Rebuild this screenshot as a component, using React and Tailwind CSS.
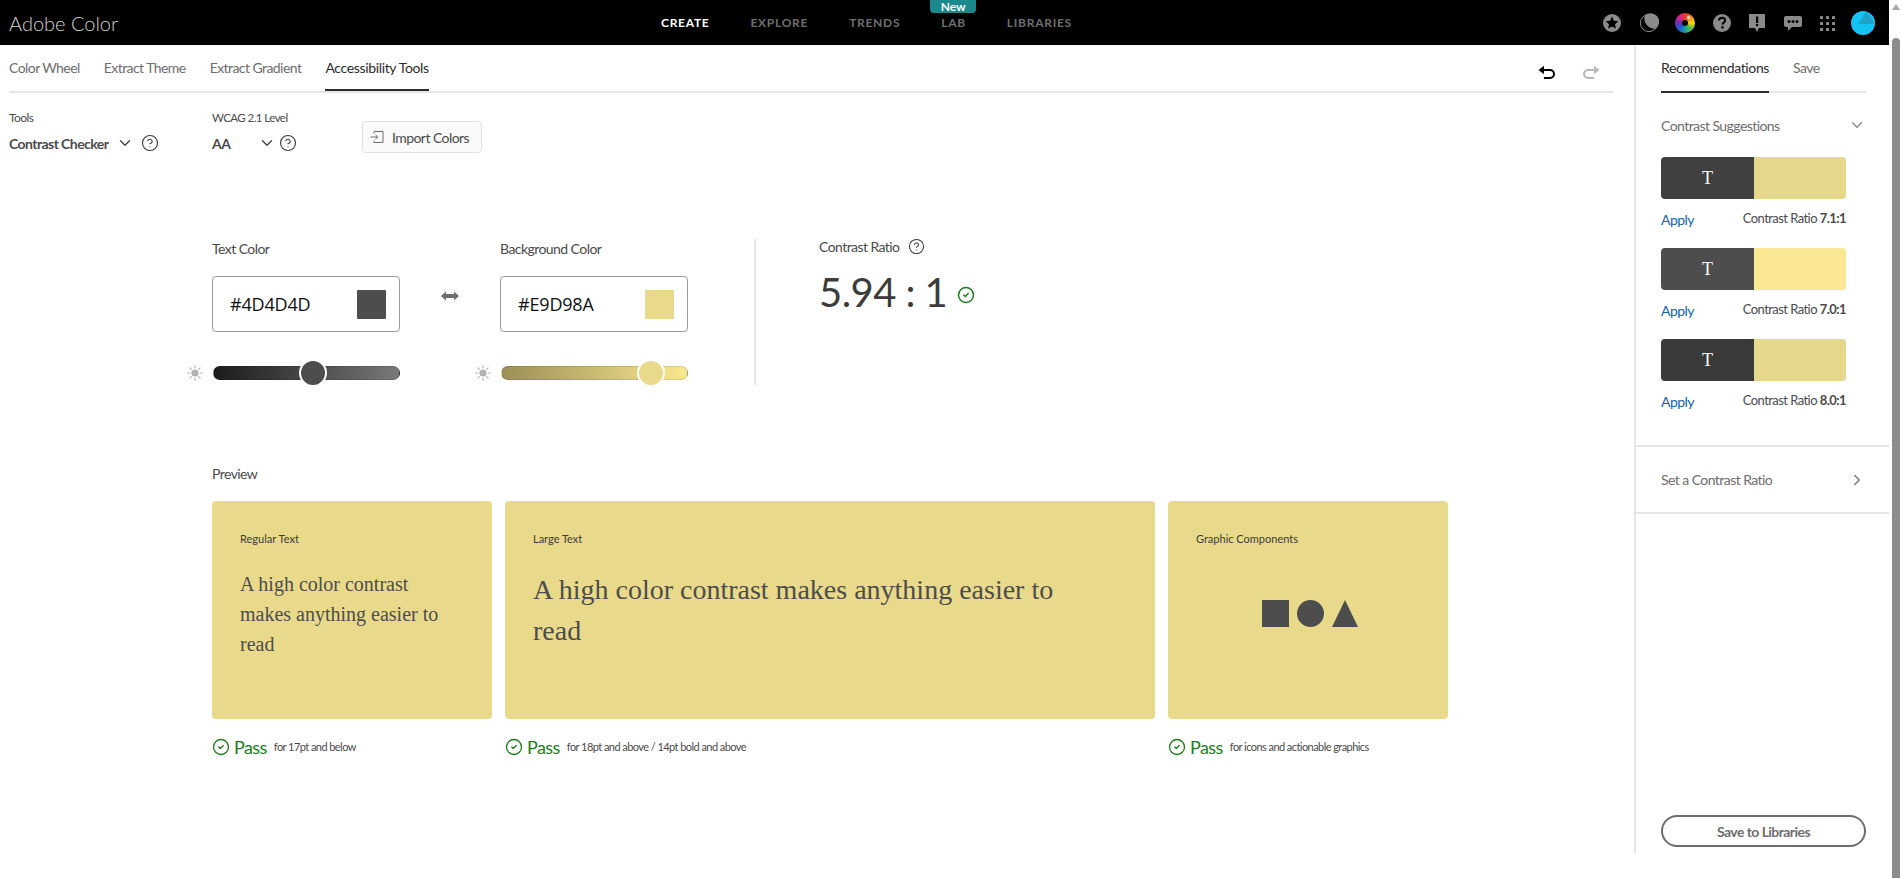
import { ChevronDown, ChevronRight, CircleCheck, CircleHelp } from 'lucide-react'

const cleanFont = "font-['Lato','Noto_Sans',sans-serif] tracking-[-0.035em]"

const suggestions = [
  { dark: 'bg-[#404040]', light: 'bg-[#e6d88a]', ratio: '7.1:1' },
  { dark: 'bg-[#4d4d4d]', light: 'bg-[#fbe894]', ratio: '7.0:1' },
  { dark: 'bg-[#3a3a3a]', light: 'bg-[#e6d88a]', ratio: '8.0:1' },
]

function Sun() {
  return (
    <svg width="16" height="16" viewBox="0 0 16 16" className="shrink-0 text-[#b3b3b3]">
      <circle cx="8" cy="8" r="3.6" fill="currentColor" />
      <g stroke="currentColor" strokeWidth="1.2" strokeLinecap="round">
        <path d="M8 .8v2M8 13.2v2M.8 8h2M13.2 8h2M2.9 2.9l1.4 1.4M11.7 11.7l1.4 1.4M2.9 13.1l1.4-1.4M11.7 4.3l1.4-1.4" />
      </g>
    </svg>
  )
}

function ColorField({ label, value, swatch }) {
  return (
    <div className="w-[188px]">
      <div className="flex h-[19px] items-center text-[14px] text-[#4b4b4b]">{label}</div>
      <div className="mt-[18px] flex h-[56px] items-center justify-between rounded-[4px] border border-[#999999] pl-[17px] pr-[13px]">
        <span className="font-['Open_Sans',sans-serif] text-[18px] tracking-[-0.01em] text-[#111111]">{value}</span>
        <div className={`h-[29px] w-[29px] rounded-[1px] ${swatch}`} />
      </div>
    </div>
  )
}

function Slider({ track, thumb, left }) {
  return (
    <div className="-ml-[25px] mt-[28px] flex h-[26px] w-[213px] items-center gap-[10px]">
      <Sun />
      <div className={`relative h-[14px] w-[187px] rounded-full border border-black/10 ${track}`}>
        <div className={`absolute top-1/2 h-[28px] w-[28px] -translate-x-1/2 -translate-y-1/2 rounded-full border-2 border-white ${thumb} ${left}`} />
      </div>
    </div>
  )
}

function PreviewCol({ width, title, note, children }) {
  return (
    <div className={width}>
      <div className="h-[218px] rounded-[4px] bg-[#e9d98a] pl-[28px] pr-[28px] pt-[31px]">
        <div className="h-[14px] text-[11px] leading-[14px] tracking-normal text-[#3c3c3c]">{title}</div>
        {children}
      </div>
      <div className="mt-[18px] flex h-[20px] items-center">
        <CircleCheck size={18} strokeWidth={1.75} className="text-[#1b7f1b]" />
        <span className="ml-[4px] text-[18px] text-[#1b7f1b]">Pass</span>
        <span className="ml-[7px] text-[11px] text-[#4b4b4b]">{note}</span>
      </div>
    </div>
  )
}

function HeaderIcons() {
  return (
    <div className="flex items-center">
      <svg width="20" height="20" viewBox="0 0 20 20">
        <circle cx="10" cy="10" r="9" fill="#8a8a8a" />
        <path d="M10 3.6l1.9 4.1 4.4.5-3.3 3 .9 4.4-3.9-2.2-3.9 2.2.9-4.4-3.3-3 4.4-.5z" fill="#000" />
      </svg>
      <svg width="20" height="20" viewBox="0 0 20 20" className="ml-[17px]">
        <circle cx="10" cy="10" r="8.6" fill="none" stroke="#8a8a8a" strokeWidth="1" />
        <path d="M6 2.200A8.600 8.600 0 1 1 17 15.500 10 10 0 0 1 6 2.200z" fill="#8a8a8a" />
      </svg>
      <div className="relative ml-[16px] h-[20px] w-[20px] rounded-full bg-[conic-gradient(#e6352b,#f08a1d,#f5d90a,#57b947,#12a3a8,#1d5fd1,#6b2fb5,#d6248f,#e6352b)]">
        <div className="absolute left-[7px] top-[7px] h-[6px] w-[6px] rounded-full bg-black" />
        <div className="absolute left-[12px] top-[3px] h-[3px] w-[3px] rounded-full bg-white/80" />
      </div>
      <svg width="20" height="20" viewBox="0 0 20 20" className="ml-[17px]">
        <circle cx="10" cy="10" r="9" fill="#8a8a8a" />
        <path d="M7 7.600c0-1.800 1.300-2.800 3.100-2.800 1.700 0 3 1 3 2.600 0 2.200-2.600 2.200-2.600 4.200" fill="none" stroke="#000" strokeWidth="2" />
        <rect x="9.300" y="13.200" width="2.300" height="2.300" fill="#000" />
      </svg>
      <svg width="18" height="20" viewBox="0 0 18 20" className="ml-[16px]">
        <path d="M1 1h16v14h-6l-2 4-2-4H1z" fill="#8a8a8a" />
        <rect x="8" y="3.500" width="2.200" height="6.500" fill="#000" />
        <rect x="8" y="11" width="2.200" height="2.200" fill="#000" />
      </svg>
      <svg width="20" height="20" viewBox="0 0 20 20" className="ml-[17px]">
        <path d="M3 3h14a2 2 0 0 1 2 2v7a2 2 0 0 1-2 2H9l-4 4v-4H3a2 2 0 0 1-2-2V5a2 2 0 0 1 2-2z" fill="#8a8a8a" />
        <circle cx="6" cy="8.500" r="1.500" fill="#000" />
        <circle cx="10" cy="8.500" r="1.500" fill="#000" />
        <circle cx="14" cy="8.500" r="1.500" fill="#000" />
      </svg>
      <svg width="18" height="18" viewBox="0 0 18 18" className="ml-[15px]" fill="#8a8a8a">
        {[2, 8, 14].map((y) =>
          [2, 8, 14].map((x) => <rect key={`${x}-${y}`} x={x} y={y} width="3" height="3" rx="0.6" />)
        )}
      </svg>
      <div className="relative ml-[15px] h-[24px] w-[24px] overflow-hidden rounded-full bg-[#12c3f4]">
        <svg width="24" height="24" viewBox="0 0 24 24" className="absolute left-0 top-0">
          <path d="M15.500 0L24 13H7z" fill="#1fa3c9" />
        </svg>
      </div>
    </div>
  )
}

export default function App() {
  return (
    <div className={`flex h-[878px] w-[1902px] overflow-hidden bg-white ${cleanFont}`}>
      <div className="w-[1889px]">
        {/* Top bar */}
        <header className="relative flex h-[45px] items-center bg-black pl-[9px] pr-[14px]">
          <div className="w-[652px] text-[20px] font-light tracking-normal text-[#d0d0d0]">Adobe Color</div>
          <nav className="flex gap-[41px] text-[12px] font-bold tracking-[0.06em] text-[#6e6e6e]">
            <span className="text-white">CREATE</span>
            <span>EXPLORE</span>
            <span>TRENDS</span>
            <span className="relative">
              LAB
              <span className="absolute -top-[14px] left-[-11px] flex h-[13px] w-[46px] items-end justify-center rounded-b-[4px] bg-[#1c8a8d] text-[12px] leading-[13px] tracking-normal text-white">
                New
              </span>
            </span>
            <span>LIBRARIES</span>
          </nav>
          <div className="ml-auto">
            <HeaderIcons />
          </div>
        </header>

        <div className="flex">
          <main className="w-[1634px]">
            {/* Tabs */}
            <div className="ml-[9px] flex h-[48px] w-[1604px] items-end justify-between border-b-2 border-[#e6e6e6]">
              <div className="flex gap-[24px] text-[14px] text-[#6e6e6e]">
                <span className="h-[48px] pt-[14px]">Color Wheel</span>
                <span className="h-[48px] pt-[14px]">Extract Theme</span>
                <span className="h-[48px] pt-[14px]">Extract Gradient</span>
                <span className="-mb-[2px] h-[48px] border-b-2 border-[#2c2c2c] pt-[14px] tracking-[-0.025em] text-[#2c2c2c]">Accessibility Tools</span>
              </div>
              <div className="flex h-[48px] items-center gap-[24px] pr-[12px] pt-[11px]">
                <svg width="20" height="16" viewBox="0 0 20 16" fill="none" stroke="#000" strokeWidth="2">
                  <path d="M5 5h8a4 4 0 0 1 0 8H7" />
                  <path d="M7 .8L1.500 5 7 9.200z" fill="#000" stroke="none" />
                </svg>
                <svg width="20" height="16" viewBox="0 0 20 16" fill="none" stroke="#b8b8b8" strokeWidth="2">
                  <path d="M15 5H7a4 4 0 0 0 0 8h6" />
                  <path d="M13 .8L18.500 5 13 9.200z" fill="#b8b8b8" stroke="none" />
                </svg>
              </div>
            </div>

            {/* Tool selectors */}
            <div className="flex h-[60px] pl-[9px] pt-[18px]">
              <div className="w-[203px]">
                <div className="h-[14px] text-[12px] leading-[14px] text-[#4b4b4b]">Tools</div>
                <div className="mt-[8px] flex h-[20px] items-center text-[14px] font-bold text-[#4b4b4b]">
                  Contrast Checker
                  <ChevronDown size={18} strokeWidth={2} className="ml-[8px]" />
                  <CircleHelp size={18} strokeWidth={1.5} className="ml-[7px] text-[#3c3c3c]" />
                </div>
              </div>
              <div className="w-[150px]">
                <div className="h-[14px] text-[11.5px] leading-[14px] text-[#4b4b4b]">WCAG 2.1 Level</div>
                <div className="mt-[8px] flex h-[20px] items-center text-[14px] font-bold text-[#4b4b4b]">
                  <span className="w-[46px]">AA</span>
                  <ChevronDown size={18} strokeWidth={2} />
                  <CircleHelp size={18} strokeWidth={1.5} className="ml-[3px] text-[#3c3c3c]" />
                </div>
              </div>
              <button className="mt-[10px] flex h-[32px] w-[120px] items-center gap-[8px] rounded-[4px] border border-[#e1e1e1] bg-[#fafafa] pl-[7px] text-[14px] text-[#4b4b4b]">
                <svg width="14" height="14" viewBox="0 0 14 14" fill="none" stroke="#6e6e6e">
                  <path d="M4 3.500V1.500h9v11H4v-2M.5 7h7M5.500 4.800L7.800 7 5.500 9.200" />
                </svg>
                Import Colors
              </button>
            </div>

            {/* Color inputs and ratio */}
            <div className="ml-[212px] mt-[86px] flex h-[146px]">
              <div>
                <ColorField label="Text Color" value="#4D4D4D" swatch="bg-[#4d4d4d]" />
                <Slider
                  track="bg-gradient-to-r from-[#1c1c1c] to-[#7a7a7a]"
                  thumb="bg-[#4d4d4d]"
                  left="left-[99px]"
                />
              </div>
              <div className="flex w-[100px] justify-center pt-[52px]">
                <svg width="18" height="10" viewBox="0 0 18 10" fill="#6e6e6e">
                  <path d="M0 5l5-4.500V3h8V.5L18 5l-5 4.500V7H5v2.500z" />
                </svg>
              </div>
              <div>
                <ColorField label="Background Color" value="#E9D98A" swatch="bg-[#e9d98a]" />
                <Slider
                  track="bg-gradient-to-r from-[#9c8f56] to-[#fbe98f]"
                  thumb="bg-[#e9d98a]"
                  left="left-[149px]"
                />
              </div>
              <div className="ml-[66px] h-[146px] w-[2px] bg-[#e6e6e6]" />
              <div className="ml-[63px]">
                <div className="flex h-[14px] items-center text-[14px] text-[#4b4b4b]">
                  Contrast Ratio
                  <CircleHelp size={17} strokeWidth={1.5} className="ml-[8px] text-[#3c3c3c]" />
                </div>
                <div className="mt-[11px] flex items-center">
                  <span className="text-[40px] font-normal leading-[56px] text-[#3c3c3c]">5.94 : 1</span>
                  <CircleCheck size={18} strokeWidth={2} className="ml-[10px] mt-[6px] text-[#1b7f1b]" />
                </div>
              </div>
            </div>

            {/* Preview */}
            <div className="ml-[212px] mt-[78px]">
              <div className="flex h-[20px] items-center text-[14px] text-[#4b4b4b]">Preview</div>
              <div className="mt-[18px] flex gap-[13px]">
                <PreviewCol width="w-[280px]" title="Regular Text" note="for 17pt and below">
                  <p className="mt-[23px] font-['Liberation_Serif',serif] text-[20px] leading-[30px] tracking-normal text-[#4d4d4d]">
                    A high color contrast makes anything easier to read
                  </p>
                </PreviewCol>
                <PreviewCol width="w-[650px]" title="Large Text" note="for 18pt and above / 14pt bold and above">
                  <p className="mt-[23px] max-w-[540px] font-['Liberation_Serif',serif] text-[28px] leading-[41px] tracking-normal text-[#4d4d4d]">
                    A high color contrast makes anything easier to read
                  </p>
                </PreviewCol>
                <PreviewCol width="w-[280px]" title="Graphic Components" note="for icons and actionable graphics">
                  <div className="mt-[54px] flex justify-center gap-[8px] pl-[3px]">
                    <div className="h-[27px] w-[27px] bg-[#4d4d4d]" />
                    <div className="h-[27px] w-[27px] rounded-full bg-[#4d4d4d]" />
                    <svg width="26" height="27" viewBox="0 0 26 27">
                      <path d="M13 0L26 27H0z" fill="#4d4d4d" />
                    </svg>
                  </div>
                </PreviewCol>
              </div>
            </div>
          </main>

          {/* Right panel */}
          <aside className="flex h-[808px] w-[255px] flex-col border-l-2 border-[#e6e6e6]">
            <div className="ml-[25px] mr-[23px] flex h-[48px] items-end gap-[24px] border-b-2 border-[#e6e6e6] text-[14px]">
              <span className="-mb-[2px] h-[48px] border-b-2 border-[#2c2c2c] pt-[12px] tracking-[-0.025em] text-[#2c2c2c]">Recommendations</span>
              <span className="h-[46px] pt-[12px] text-[#6e6e6e]">Save</span>
            </div>
            <div className="h-[354px] border-b-2 border-[#e6e6e6] pl-[25px] pr-[23px]">
              <div className="flex h-[64px] items-center justify-between text-[14px] text-[#6e6e6e]">
                Contrast Suggestions
                <ChevronDown size={18} strokeWidth={1.75} className="text-[#8a8a8a]" />
              </div>
              {suggestions.map((s) => (
                <div key={s.ratio} className="mb-[19px] w-[185px]">
                  <div className="flex h-[42px] overflow-hidden rounded-[4px]">
                    <div className={`flex w-[93px] items-center justify-center font-['Liberation_Serif',serif] text-[18px] tracking-normal text-white ${s.dark}`}>
                      T
                    </div>
                    <div className={`flex-1 ${s.light}`} />
                  </div>
                  <div className="mt-[10px] flex h-[20px] items-center justify-between text-[13px] text-[#4b4b4b]">
                    <span className="text-[14px] text-[#1464b4]">Apply</span>
                    <span>
                      Contrast Ratio <b className="font-bold">{s.ratio}</b>
                    </span>
                  </div>
                </div>
              ))}
            </div>
            <div className="flex h-[67px] items-center justify-between border-b-2 border-[#e6e6e6] pl-[25px] pr-[23px] text-[14px] text-[#6e6e6e]">
              Set a Contrast Ratio
              <ChevronRight size={18} strokeWidth={1.75} />
            </div>
            <div className="mt-auto pb-[6px] pl-[25px] pr-[23px]">
              <button className="h-[32px] w-[205px] rounded-full border-2 border-[#6e6e6e] text-[14px] font-bold text-[#6e6e6e]">
                Save to Libraries
              </button>
            </div>
          </aside>
        </div>
      </div>

      {/* Scrollbar */}
      <div className="flex w-[13px] flex-col items-center">
        <svg width="10" height="8" viewBox="0 0 10 8" className="mt-[3px]">
          <path d="M5 1l4 6H1z" fill="#a8a8a8" />
        </svg>
        <div className="mt-[27px] w-[8px] flex-1 rounded-t-[4px] bg-[#8c8c8c]" />
      </div>
    </div>
  )
}
